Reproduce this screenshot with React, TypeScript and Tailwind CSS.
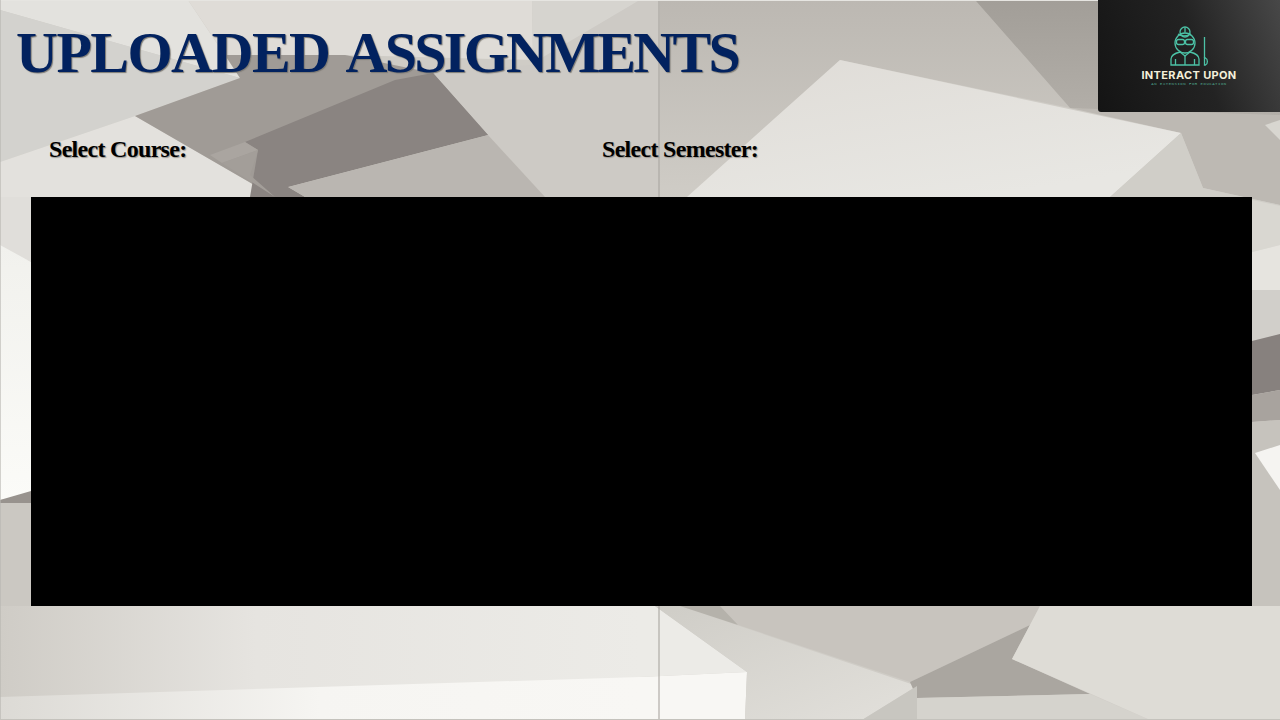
const shapes: [string, string][] = [
  ["0,0 188,0 240,78 0,10", "#e3e2de"],
  ["0,10 240,78 135,116 0,162", "#d3d2ce"],
  ["0,162 135,116 275,197 290,260 0,260", "#e3e1dd"],
  ["188,0 532,0 533,60 345,55 225,55", "#dfdcd7"],
  ["532,0 640,0 530,65 533,60", "#d6d4cf"],
  ["345,55 433,73 530,65 640,0 660,0 687,197 545,197", "#cdcac5"],
  ["660,0 975,0 1070,108 840,60 687,197 660,197", "url(#topMid)"],
  ["975,0 1280,0 1280,125 1070,108", "url(#topDark)"],
  ["1070,108 1181,133 1203,188 1280,205 1280,115", "#bdb9b3"],
  ["225,55 345,55 433,73 488,135 288,187 305,197 275,197 135,116 240,78", "#a09b96"],
  ["245,142 395,80 433,73 488,135 288,187 305,197 250,197 258,150", "#8a8481"],
  ["210,155 245,142 258,150 222,163", "#aaa5a0"],
  ["222,163 258,150 250,175 275,197", "#a39e99"],
  ["288,187 488,135 545,197 305,197", "#bab6b1"],
  ["840,60 1181,133 1110,197 687,197", "url(#lightPanel)"],
  ["1181,133 1203,188 1280,205 1280,300 1060,300 1110,197", "#d0cec8"],
  ["1265,125 1280,120 1280,140", "#d8d6d0"],
  ["1252,200 1280,206 1280,245 1252,252", "#d9d7d1"],
  ["1252,252 1280,245 1280,290 1252,290", "#e6e4df"],
  ["1252,290 1280,290 1280,334 1252,341", "#d1cfca"],
  ["1252,341 1280,334 1280,390 1252,395", "#87817e"],
  ["1252,395 1280,390 1280,420 1252,422", "#a8a39e"],
  ["1252,422 1280,420 1280,650 1252,650", "#c6c3bd"],
  ["1255,453 1280,445 1280,490", "#f5f4f1"],
  ["0,197 31,197 31,262 0,245", "#e0deda"],
  ["0,245 31,262 31,495 0,500", "url(#leftWhite)"],
  ["0,500 31,491 31,503 0,503", "#98938e"],
  ["0,503 31,503 31,620 0,620", "#cbc8c2"],
  ["0,606 640,606 640,720 0,720", "url(#bottomLeft)"],
  ["0,697 640,677 640,720 0,720", "url(#bottomWhite)"],
  ["640,606 655,606 747,672 640,677", "#ecebe7"],
  ["640,677 747,672 745,720 640,720", "#f8f7f4"],
  ["655,606 680,606 917,686 862,720 745,720 747,672", "url(#midBottom)"],
  ["680,606 730,606 738,625", "#b5b2ab"],
  ["720,606 1040,606 1030,625 910,682 738,625", "#c8c4be"],
  ["910,682 1030,625 1012,659 1090,694 917,698", "#aaa6a0"],
  ["917,698 1090,694 1150,720 917,720", "#d5d3cd"],
  ["917,686 862,720 917,720", "#c8c6c0"],
  ["1040,606 1280,606 1280,720 1150,720 1012,659", "#dedcd6"],
];

function Background() {
  return (
    <svg className="absolute inset-0" width="1280" height="720" viewBox="0 0 1280 720">
      <defs>
        <linearGradient id="topMid" x1="0" y1="0" x2="0" y2="1">
          <stop offset="0" stopColor="#bcb8b2" />
          <stop offset="1" stopColor="#cfccc6" />
        </linearGradient>
        <linearGradient id="topDark" x1="0" y1="0" x2="0" y2="1">
          <stop offset="0" stopColor="#a29e98" />
          <stop offset="1" stopColor="#b4b0aa" />
        </linearGradient>
        <linearGradient id="lightPanel" x1="0" y1="0" x2="0.6" y2="1">
          <stop offset="0" stopColor="#dfdcd7" />
          <stop offset="1" stopColor="#e8e7e3" />
        </linearGradient>
        <linearGradient id="leftWhite" x1="0" y1="0" x2="0" y2="1">
          <stop offset="0" stopColor="#f1f1ed" />
          <stop offset="1" stopColor="#fbfbf8" />
        </linearGradient>
        <linearGradient id="bottomLeft" x1="0" y1="0" x2="1" y2="0">
          <stop offset="0" stopColor="#cfccc6" />
          <stop offset="0.4" stopColor="#e6e4e0" />
          <stop offset="1" stopColor="#ecebe7" />
        </linearGradient>
        <linearGradient id="bottomWhite" x1="0" y1="0" x2="1" y2="0">
          <stop offset="0" stopColor="#dcdad5" />
          <stop offset="0.5" stopColor="#f6f5f2" />
          <stop offset="1" stopColor="#f8f7f4" />
        </linearGradient>
        <linearGradient id="midBottom" x1="0" y1="0" x2="1" y2="1">
          <stop offset="0" stopColor="#cfcdc7" />
          <stop offset="1" stopColor="#e2e0db" />
        </linearGradient>
      </defs>
      <rect width="1280" height="720" fill="#cfccc6" />
      {shapes.map(([points, fill]) => (
        <polygon key={points} points={points} fill={fill} />
      ))}
      <rect x="658" y="0" width="2" height="720" fill="#a9a6a1" opacity="0.55" />
      <rect x="0" y="0" width="1280" height="1" fill="#e6e5e1" />
      <rect x="0" y="0" width="1" height="720" fill="#b8b6b0" opacity="0.6" />
      <rect x="0" y="719" width="1280" height="1" fill="#c4c2bc" />
    </svg>
  );
}

function TeacherIcon() {
  return (
    <svg width="50" height="44" viewBox="0 0 50 44" fill="none" stroke="#4cc2a6" strokeWidth="1.300">
      <g transform="translate(1 0)">
        <circle cx="20" cy="17" r="10" />
        <circle cx="20" cy="6" r="5" />
        <path d="M13 8c4 3 9 2 13 0M20 1.500v5" />
        <rect x="11.500" y="13.500" width="8" height="5" rx="2" />
        <rect x="20.500" y="13.500" width="8" height="5" rx="2" />
        <path d="M6 39V33c0-4 5-6 9-7l5 4 5-4c4 1 9 3 9 7v6z" />
        <path d="M10.500 39v-6M29.500 39v-6M20 30v9" />
        <path d="M39.500 11v21" />
        <path d="M39.500 32h1c2.500 1 2.500 6 0 7h-1z" />
      </g>
    </svg>
  );
}

function Logo() {
  return (
    <div className="flex h-[112px] w-[182px] flex-col items-center rounded-bl-[3px] bg-[linear-gradient(70deg,#141414_0%,#232323_55%,#484848_100%)] pt-[26px]">
      <TeacherIcon />
      <div className="mt-[-2px] text-[11px] leading-[14px] font-bold tracking-[0.35px] text-[#f4f0da] font-['Inter',sans-serif]">
        INTERACT UPON
      </div>
      <div className="text-[4px] leading-[5px] tracking-[0.5px] text-[#4fa890] font-['Liberation_Mono',monospace]">
        AN EXTENSION FOR EDUCATION
      </div>
    </div>
  );
}

export default function App() {
  return (
    <div className="relative h-[720px] w-[1280px] overflow-hidden">
      <Background />
      <div className="relative flex h-full flex-col">
        <header className="flex h-[112px] items-start justify-between">
          <h1 className="flex gap-[16px] pt-[23px] pl-[16px] text-[58px] leading-[60px] font-bold text-[#02225f] [text-shadow:1px_1px_1px_#7d7a74] font-['Liberation_Serif',serif]">
            <span className="tracking-[-1.500px]">UPLOADED</span>
            <span className="tracking-[-2.700px]">ASSIGNMENTS</span>
          </h1>
          <Logo />
        </header>
        <div className="mt-[21px] flex pl-[49px] text-[24px] leading-[32px] font-bold tracking-[-0.700px] text-black [text-shadow:1px_1px_1px_#9a9690] font-['Liberation_Serif',serif]">
          <div className="w-[553px]">Select Course:</div>
          <div>Select Semester:</div>
        </div>
        <main className="mt-[32px] ml-[31px] h-[409px] w-[1221px] bg-black" />
      </div>
    </div>
  );
}
